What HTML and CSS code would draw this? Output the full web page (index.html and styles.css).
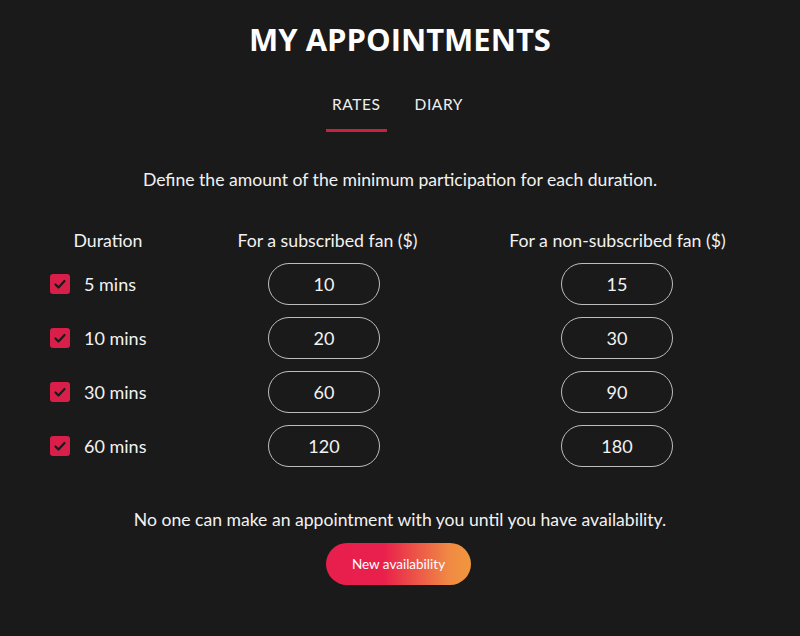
FILE: index.html
```html
<!DOCTYPE html>
<html>
<head>
<meta charset="utf-8">
<link rel="stylesheet" href="styles.css">
</head>
<body>
<main class="page">
  <h1 class="title">MY APPOINTMENTS</h1>
  <nav class="tabs">
    <span class="tab active">RATES</span>
    <span class="tab">DIARY</span>
  </nav>
  <p class="intro">Define the amount of the minimum participation for each duration.</p>
  <div class="rates">
    <div class="head">Duration</div>
    <div class="head">For a subscribed fan ($)</div>
    <div class="head">For a non-subscribed fan ($)</div>

    <label class="dur"><span class="check"><svg viewBox="0 0 20 20"><path d="M5.5 10.5l3 3 6-6.5"/></svg></span>5 mins</label>
    <div class="cell"><span class="pill">10</span></div>
    <div class="cell"><span class="pill">15</span></div>

    <label class="dur"><span class="check"><svg viewBox="0 0 20 20"><path d="M5.5 10.5l3 3 6-6.5"/></svg></span>10 mins</label>
    <div class="cell"><span class="pill">20</span></div>
    <div class="cell"><span class="pill">30</span></div>

    <label class="dur"><span class="check"><svg viewBox="0 0 20 20"><path d="M5.5 10.5l3 3 6-6.5"/></svg></span>30 mins</label>
    <div class="cell"><span class="pill">60</span></div>
    <div class="cell"><span class="pill">90</span></div>

    <label class="dur"><span class="check"><svg viewBox="0 0 20 20"><path d="M5.5 10.5l3 3 6-6.5"/></svg></span>60 mins</label>
    <div class="cell"><span class="pill">120</span></div>
    <div class="cell"><span class="pill">180</span></div>
  </div>
  <p class="note">No one can make an appointment with you until you have availability.</p>
  <button class="cta">New availability</button>
</main>
</body>
</html>
```

FILE: styles.css
```css
html, body {
  margin: 0;
  padding: 0;
  background: #1a1a1a;
}
body {
  color: #f2f2f2;
  font-family: "Lato", "Open Sans", sans-serif;
}
.page {
  width: 800px;
  height: 636px;
  display: flex;
  flex-direction: column;
  align-items: center;
  box-sizing: border-box;
  padding-top: 19px;
}
.title {
  margin: 0;
  font-family: "Open Sans", sans-serif;
  font-weight: 700;
  font-size: 31px;
  line-height: 40px;
  color: #ffffff;
  letter-spacing: 0;
}
.tabs {
  margin-top: 36px;
  display: flex;
  gap: 22px;
  margin-right: 5px;
}
.tab {
  font-size: 15.5px;
  letter-spacing: 0.6px;
  line-height: 18px;
  padding: 0 6px 16px;
  border-bottom: 3px solid transparent;
  color: #f0f0f0;
}
.tab.active {
  border-bottom-color: #c8203f;
}
.intro {
  margin: 36px 0 0;
  font-size: 17.6px;
  line-height: 24px;
}
.rates {
  margin-top: 38px;
  align-self: flex-start;
  margin-left: 50px;
  display: grid;
  grid-template-columns: 116px 318px 266px;
  grid-auto-rows: 54px;
  grid-template-rows: 27px;
  align-items: center;
}
.head {
  text-align: center;
  font-size: 17.7px;
  line-height: 22px;
  align-self: start;
}
.head:nth-child(2) { padding-left: 5px; }
.head:nth-child(3) { padding-left: 1px; }
.dur {
  display: flex;
  align-items: center;
  gap: 14px;
  font-size: 18px;
  white-space: nowrap;
}
.check {
  width: 20px;
  height: 20px;
  border-radius: 3px;
  background: #d91f49;
  display: inline-flex;
}
.check svg {
  width: 20px;
  height: 20px;
  fill: none;
  stroke: #1a1a1a;
  stroke-width: 2.2;
  stroke-linecap: round;
  stroke-linejoin: round;
}
.cell {
  display: flex;
  justify-content: center;
}
.cell:nth-child(3n+2) { padding-right: 2px; }
.pill {
  width: 110px;
  height: 40px;
  border: 1px solid #bdbdbd;
  border-radius: 21px;
  display: flex;
  align-items: center;
  justify-content: center;
  font-size: 18px;
}
.note {
  margin: 35px 0 0;
  font-size: 17.6px;
  line-height: 24px;
}
.cta {
  margin-top: 11px;
  margin-right: 3px;
  width: 145px;
  height: 42px;
  border: none;
  border-radius: 21px;
  background: linear-gradient(90deg, #e81f4d 0%, #e9204c 40%, #f08a44 85%, #f0973c 100%);
  color: #ffffff;
  font-family: "Lato", sans-serif;
  font-size: 13.5px;
  padding: 0;
}
```
